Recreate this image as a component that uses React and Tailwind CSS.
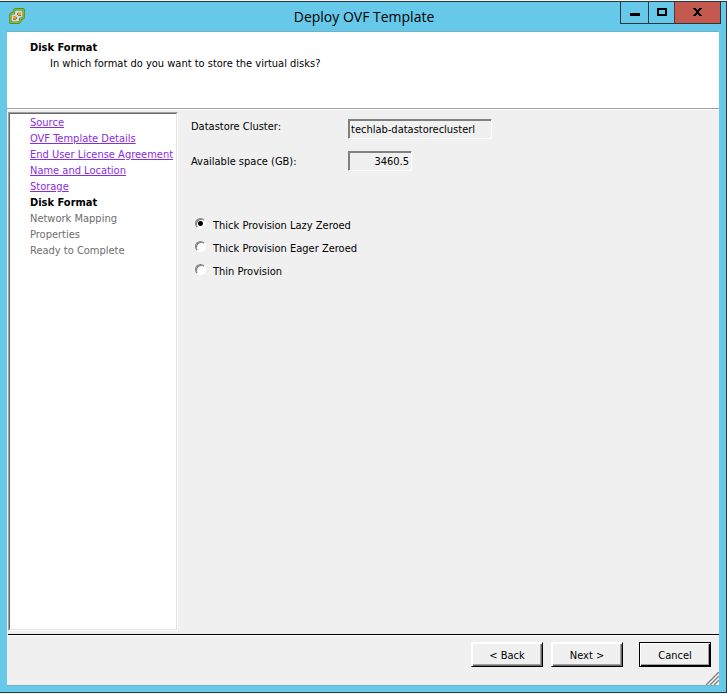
import React, { useState } from "react";

const steps = [
    { name: "Source", state: "done" },
    { name: "OVF Template Details", state: "done" },
    { name: "End User License Agreement", state: "done" },
    { name: "Name and Location", state: "done" },
    { name: "Storage", state: "done" },
    { name: "Disk Format", state: "current" },
    { name: "Network Mapping", state: "pending" },
    { name: "Properties", state: "pending" },
    { name: "Ready to Complete", state: "pending" }
];

const formats = [
    { id: "lazy", label: "Thick Provision Lazy Zeroed" },
    { id: "eager", label: "Thick Provision Eager Zeroed" },
    { id: "thin", label: "Thin Provision" }
];

// two overlapping boxes merged into one green outline, with two orange blocks inside
function AppIcon() {
    return (
        <svg width="16" height="16" viewBox="0 0 16 16" fill="none" strokeLinejoin="round">
            <path
                d="M6.300 1.300h8l.4.4v7.600l-1.400 1.400h-2v2.600l-1.400 1.400H1.700l-.4-.4V6.700L2.700 5.300h2.200V2.700z"
                fill="#bfe2f0"
                stroke="#55791f"
                strokeWidth="2.400"
            />
            <path
                d="M6.300 1.300h8l.4.4v7.600l-1.400 1.400h-2v2.600l-1.400 1.400H1.700l-.4-.4V6.700L2.700 5.300h2.200V2.700z"
                stroke="#86bd2f"
                strokeWidth="1.300"
            />
            <path d="M9 4h3v3H9z" fill="#f7a325" />
            <path d="M4 8h3v3H4z" fill="#f09a22" />
            <path d="M9 7h3v1H9zM4 11h3v1H4z" fill="#c26f14" />
            <path d="M8 5h1v2H8zM7 9h1v2H7z" fill="#b9701a" />
        </svg>
    );
}

function WindowControls() {
    return (
        <div className="flex h-[22px] justify-self-end border border-t-0 border-[#2b353c]">
            <button aria-label="Minimize" className="flex w-[27px] items-center justify-center">
                <svg width="10" height="10" viewBox="0 0 10 10" shapeRendering="crispEdges">
                    <path d="M0 5h10v3H0z" fill="#000" />
                </svg>
            </button>
            <button
                aria-label="Maximize"
                className="flex w-[26px] items-center justify-center border-l border-[#2b353c]">
                <svg width="10" height="10" viewBox="0 0 10 10" shapeRendering="crispEdges">
                    <path d="M1 1h8v6H1z" fill="none" stroke="#000" strokeWidth="2" />
                </svg>
            </button>
            <button
                aria-label="Close"
                className="flex w-[46px] items-center justify-center border-l border-[#5c3431] bg-[#c4594f]">
                <svg width="9" height="10" viewBox="0 0 9 10" shapeRendering="crispEdges">
                    <path
                        d="M0 0h3v1h1v1h1V1h1V0h3v1H8v1H7v1H6v2h1v1h1v1h1v1H6V7H5V6H4v1H3v1H0V7h1V6h1V5h1V3H2V2H1V1H0z"
                        fill="#000"
                    />
                </svg>
            </button>
        </div>
    );
}

function PushButton({ children }) {
    return (
        <button className="h-[25px] w-[72px] border border-t-white border-l-white border-r-black border-b-black bg-[#f0f0f0] pt-0.5 shadow-[inset_1px_1px_0_#fff,inset_-1px_-1px_0_#696969,inset_-2px_-2px_0_#a0a0a0]">
            {children}
        </button>
    );
}

export default function App() {
    const [format, setFormat] = useState("lazy");

    return (
        <div className="flex min-h-screen flex-col border-y border-[#eef3f4] font-['DejaVu_Sans_Condensed','DejaVu_Sans',sans-serif] text-[11px] leading-4 text-black">
            <div className="flex flex-1 flex-col border border-l-0 border-[#2b353c] bg-[#66c9ea] pb-1.5 pl-[7px]">
                <header className="grid h-[29px] grid-cols-[1fr_auto_1fr] pr-[5px]">
                    <div className="pt-1.5 pl-0.5">
                        <AppIcon />
                    </div>
                    <h1 className="self-center font-['Open_Sans','Noto_Sans',sans-serif] text-[14px] leading-5">
                        Deploy OVF Template
                    </h1>
                    <WindowControls />
                </header>

                <main className="relative mr-[7px] flex flex-1 flex-col border-y border-[#6fb3ca] bg-[#f0f0f0]">
                    <div className="h-[77px] border-b border-[#a0a0a0] bg-white px-[23px] pt-2">
                        <h2 className="font-bold">Disk Format</h2>
                        <p className="pl-5">In which format do you want to store the virtual disks?</p>
                    </div>

                    <div className="flex flex-1 border-t border-white pt-0.5 pl-px">
                        <nav className="mb-[3px] w-[170px] border border-t-[#a0a0a0] border-r-white border-b-white border-l-[#a0a0a0]">
                            <ul className="h-full border border-t-[#696969] border-r-[#e3e3e3] border-b-[#e3e3e3] border-l-[#696969] bg-white pt-px pl-5">
                                {steps.map((step) => (
                                    <li key={step.name} className="whitespace-nowrap">
                                        {step.state === "done" && (
                                            <a href="#" className="text-[#8a2be2] underline">
                                                {step.name}
                                            </a>
                                        )}
                                        {step.state === "current" && <span className="font-bold">{step.name}</span>}
                                        {step.state === "pending" && (
                                            <span className="text-[#6d6d6d]">{step.name}</span>
                                        )}
                                    </li>
                                ))}
                            </ul>
                        </nav>

                        <section className="flex-1 pt-[7px] pl-[13px]">
                            <div className="grid grid-cols-[157px_1fr] gap-y-3">
                                <label htmlFor="cluster">Datastore Cluster:</label>
                                <input
                                    id="cluster"
                                    readOnly
                                    value="techlab-datastoreclusterl"
                                    className="h-5 w-36 border border-t-[#808080] border-r-white border-b-white border-l-[#808080] bg-[#f0f0f0] px-0.5 shadow-[inset_1px_1px_0_#808080]"
                                />
                                <label htmlFor="space" className="pt-[3px]">
                                    Available space (GB):
                                </label>
                                <input
                                    id="space"
                                    readOnly
                                    value="3460.5"
                                    className="h-5 w-16 border border-t-[#808080] border-r-white border-b-white border-l-[#808080] bg-[#f0f0f0] px-0.5 text-right shadow-[inset_1px_1px_0_#808080]"
                                />
                            </div>

                            <div className="mt-[47px] flex flex-col gap-[7px] pl-1">
                                {formats.map((f) => (
                                    <label key={f.id} className="flex gap-[7px]">
                                        <input
                                            type="radio"
                                            name="format"
                                            checked={format === f.id}
                                            onChange={() => setFormat(f.id)}
                                            className="size-[11px] appearance-none rounded-full border border-t-[#808080] border-r-white border-b-white border-l-[#808080] bg-white shadow-[inset_1px_1px_0_#808080] checked:bg-[radial-gradient(circle,#000_2px,#fff_3px)]"
                                        />
                                        {f.label}
                                    </label>
                                ))}
                            </div>
                        </section>
                    </div>

                    <footer className="ml-px flex h-[51px] justify-end gap-2 border-t border-black pt-[7px] pr-2 shadow-[inset_0_1px_0_#fff]">
                        <PushButton>&lt; Back</PushButton>
                        <PushButton>Next &gt;</PushButton>
                        <button className="ml-2 h-[25px] w-[72px] border border-black bg-[#f0f0f0] pt-0.5 shadow-[inset_1px_1px_0_#fff,inset_-1px_-1px_0_#000,inset_-2px_-2px_0_#a0a0a0]">
                            Cancel
                        </button>
                    </footer>

                    <svg
                        width="13"
                        height="13"
                        viewBox="0 0 13 13"
                        className="absolute right-0 bottom-0"
                        fill="none">
                        <path d="M1 13L13 1M5 13l8-8M9 13l4-4" stroke="#fff" strokeWidth="3" />
                        <path d="M0 13L13 0M4 13l9-9M8 13l5-5" stroke="#808080" strokeWidth="1.500" />
                    </svg>
                </main>
            </div>
        </div>
    );
}
